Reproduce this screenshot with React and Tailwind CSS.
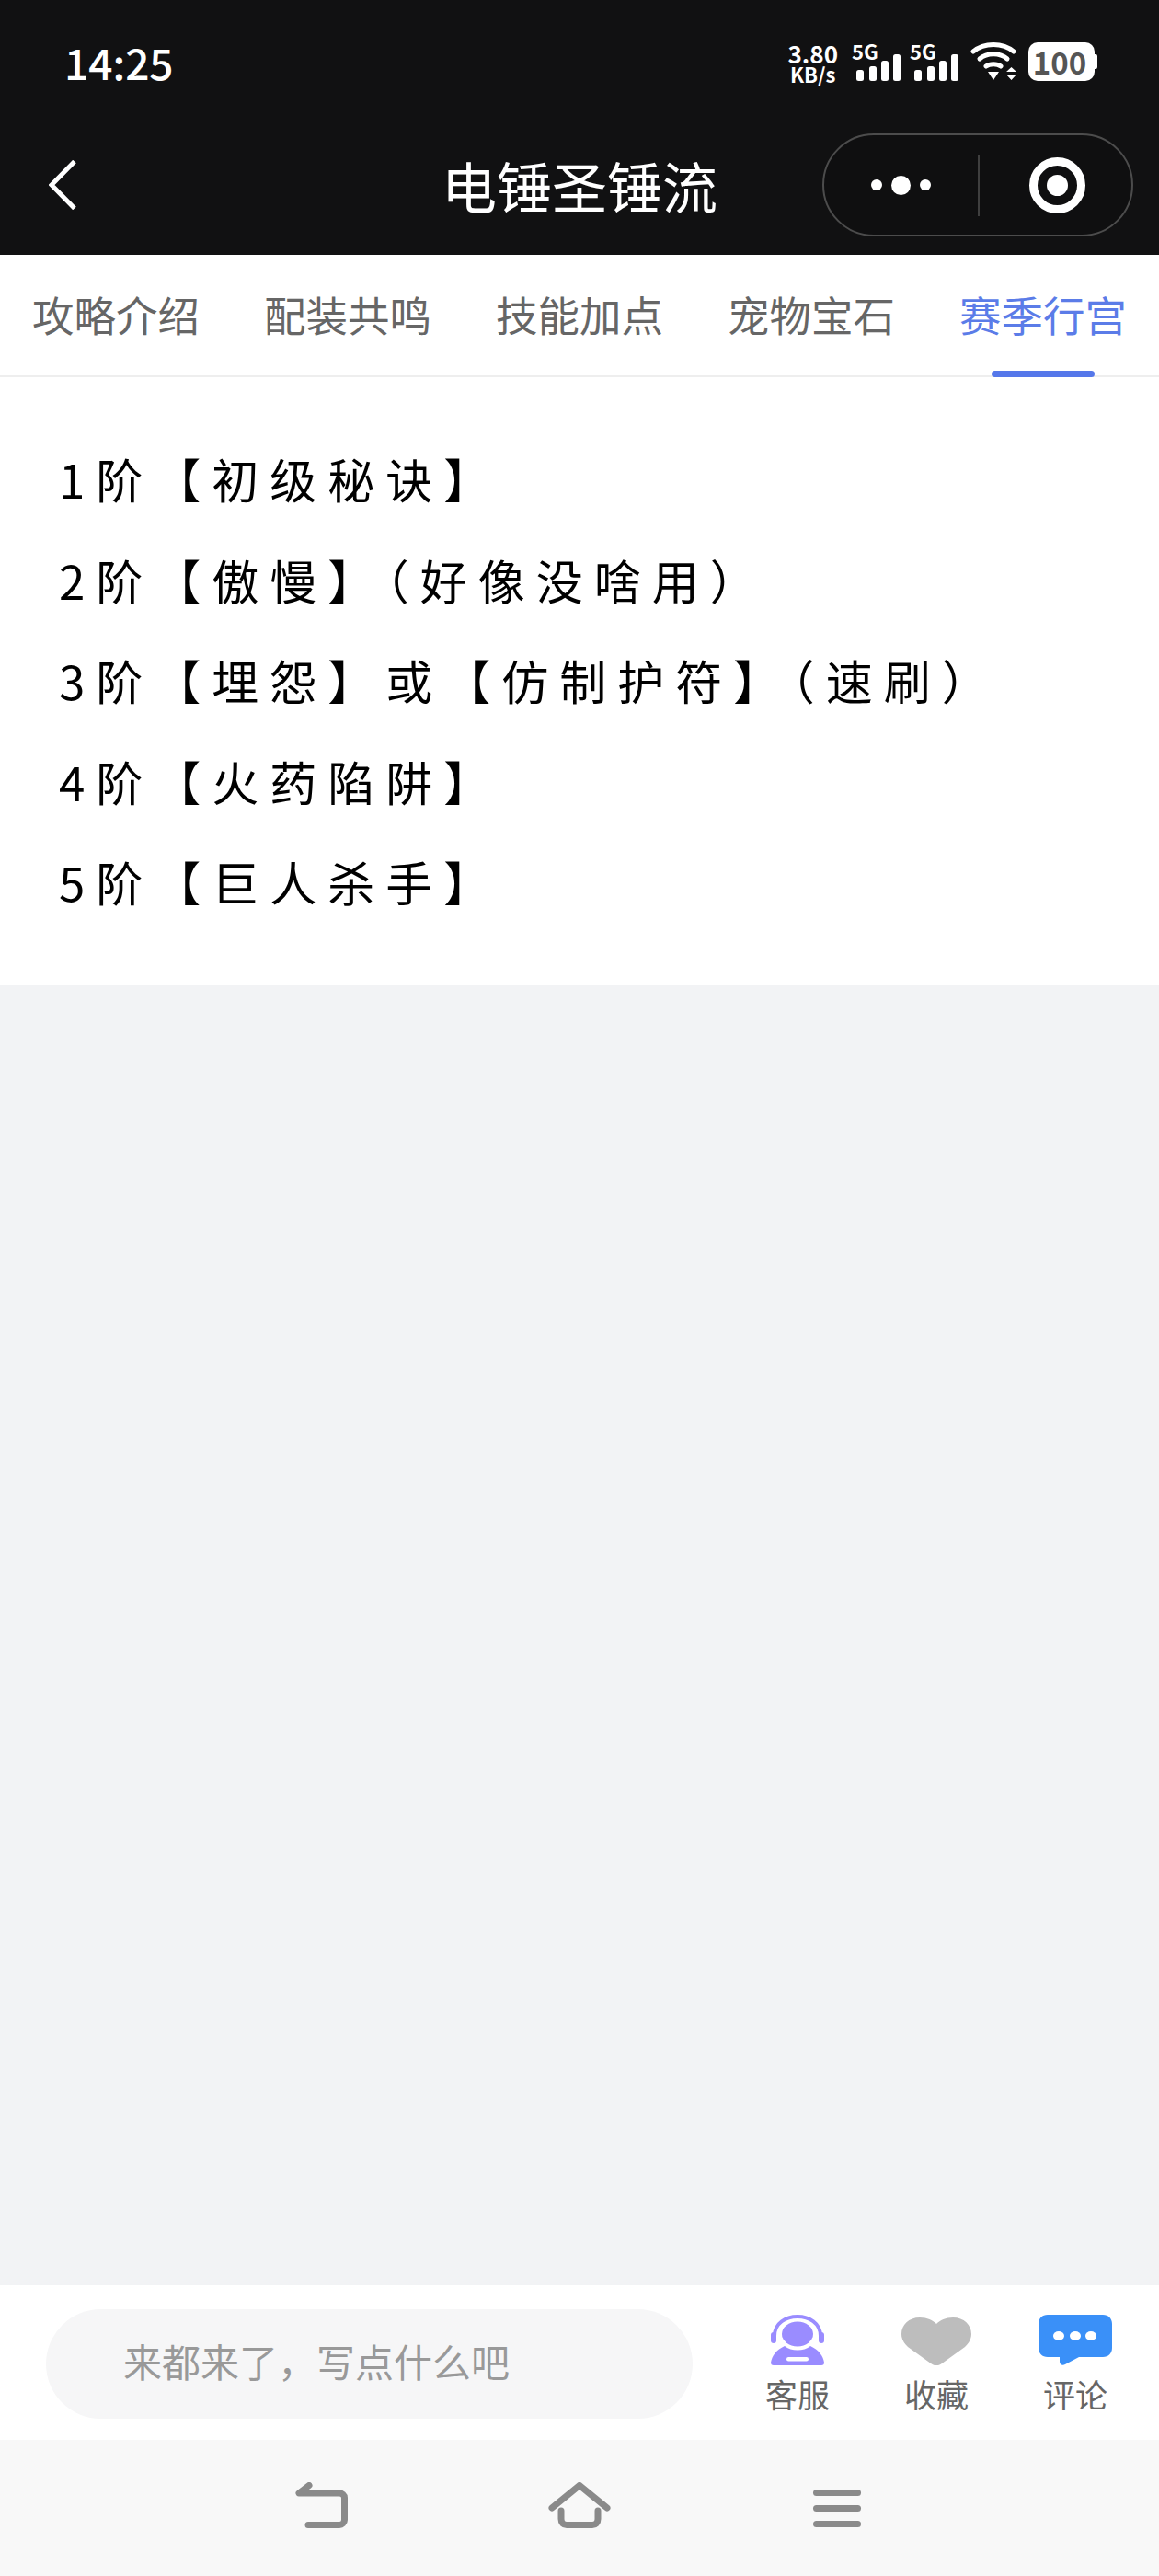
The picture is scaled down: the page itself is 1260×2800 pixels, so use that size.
import React from "react";

const FONT = "font-['Noto_Sans_CJK_SC','Noto_Sans',sans-serif]";

const tabs = ["攻略介绍", "配装共鸣", "技能加点", "宠物宝石", "赛季行宫"];

const lines = [
  "1阶【初级秘诀】",
  "2阶【傲慢】（好像没啥用）",
  "3阶【埋怨】或【仿制护符】（速刷）",
  "4阶【火药陷阱】",
  "5阶【巨人杀手】",
];

function Signal() {
  return (
    <div className="relative w-[50px] h-[42px]">
      <span className="absolute -left-[3px] -top-[3px] text-[22px] leading-[24px] font-bold whitespace-nowrap">5G</span>
      <svg width="50" height="42" viewBox="0 0 50 42" fill="#fff">
        <rect x="2" y="30" width="8" height="12" rx="2.5" />
        <rect x="16" y="26" width="8" height="16" rx="2.5" />
        <rect x="29" y="20" width="8" height="22" rx="2.5" />
        <rect x="42" y="13" width="8" height="29" rx="2.5" />
      </svg>
    </div>
  );
}

function Wifi() {
  return (
    <svg width="50" height="42" viewBox="0 0 50 42" fill="none" stroke="#fff" strokeWidth="5" strokeLinecap="round">
      <path d="M3 10 C15 0 35 0 47 10" />
      <path d="M10 18 C18 11 32 11 40 18" />
      <path d="M17 26 C21 23 29 23 33 26" />
      <path d="M19 32 H31 L25 41 Z" fill="#fff" stroke="none" />
      <path d="M39 32 L44.500 27 L50 32 Z M39 35 H50 L44.500 41 Z" fill="#fff" stroke="none" />
    </svg>
  );
}

function Headset() {
  return (
    <svg width="58" height="55" viewBox="0 0 58 55" fill="#9a8cff">
      <path d="M4 23 C4 -5 54 -5 54 23" fill="none" stroke="#9a8cff" strokeWidth="4" />
      <rect x="0" y="19" width="6" height="12" rx="3" />
      <rect x="52" y="19" width="6" height="12" rx="3" />
      <ellipse cx="29" cy="21" rx="17" ry="13.500" />
      <path d="M15 34 C22 40 36 40 43 34 C52 38 57 45 58 52 C58 54 57 55 55 55 H3 C1 55 0 54 0 52 C1 45 6 38 15 34 Z" />
      <rect x="17" y="46" width="24" height="4.500" rx="2.200" fill="#fff" />
    </svg>
  );
}

function Heart() {
  return (
    <svg width="76" height="52" viewBox="0 0 76 52" fill="#bdbdbd">
      <path d="M20 0 C28 0 34 3 38 7 C42 3 48 0 56 0 C68 0 76 8 76 18 C76 24 73 28 69 32 L44 50 C40 53 36 53 32 50 L7 32 C3 28 0 24 0 18 C0 8 8 0 20 0 Z" />
    </svg>
  );
}

function Chat() {
  return (
    <svg width="80" height="55" viewBox="0 0 80 55" fill="#3a90f8">
      <path d="M10 0 H70 C76 0 80 4 80 10 V36 C80 42 76 46 70 46 H44 L29 54 C26 56 23 54 23 51 V46 H10 C4 46 0 42 0 36 V10 C0 4 4 0 10 0 Z" />
      <ellipse cx="22" cy="23" rx="6" ry="5" fill="#fff" />
      <ellipse cx="40" cy="23" rx="6" ry="5" fill="#fff" />
      <ellipse cx="57" cy="23" rx="6" ry="5" fill="#fff" />
    </svg>
  );
}

function ActionItem({ icon, label, slot }) {
  return (
    <div className={`flex flex-col items-center ${slot}`}>
      <div className="h-[58px] flex items-end justify-center">{icon}</div>
      <span className="text-[35px] leading-[50px] text-[#666] mt-[6px]">{label}</span>
    </div>
  );
}

export default function App() {
  return (
    <div className={`w-[1260px] h-[2800px] flex flex-col bg-[#f2f3f5] ${FONT}`}>
      {/* Header */}
      <div className="h-[277px] bg-[#111112] text-white shrink-0">
        <div className="h-[134px] flex items-center justify-between pl-[70px] pr-[70px]">
          <span className="text-[46px] font-medium leading-none">14:25</span>
          <div className="flex items-center">
            <div className="flex flex-col items-center font-bold mr-[18px]">
              <span className="text-[26px] leading-[25px]">3.80</span>
              <span className="text-[22px] leading-[20px]">KB/s</span>
            </div>
            <Signal />
            <div className="w-[13px]" />
            <Signal />
            <div className="w-[13px]" />
            <Wifi />
            <div className="w-[13px]" />
            <div className="relative w-[72px] h-[42px] bg-white rounded-[10px] flex items-center justify-center pr-[4px] text-[#555] font-bold text-[33px] leading-none">
              100
              <div className="absolute -right-[3px] top-[13px] w-[4px] h-[16px] bg-white rounded-r-[2px]" />
            </div>
          </div>
        </div>
        <div className="h-[134px] grid grid-cols-[1fr_auto_1fr] items-center">
          <div className="pl-[53px]">
            <svg width="30" height="54" viewBox="0 0 30 54" fill="none" stroke="#fff" strokeWidth="5">
              <path d="M28 1.500 L3 27 L28 52.500" />
            </svg>
          </div>
          <h1 className="text-[60px] leading-none font-normal">电锤圣锤流</h1>
          <div className="justify-self-end mr-[28px] w-[338px] h-[112px] rounded-full border-2 border-[#4c4c4c] bg-[#0f0f10] flex items-center">
            <div className="w-[167px] flex items-center justify-center gap-[10px]">
              <span className="w-[12px] h-[12px] rounded-full bg-white" />
              <span className="w-[21px] h-[21px] rounded-full bg-white" />
              <span className="w-[12px] h-[12px] rounded-full bg-white" />
            </div>
            <div className="w-[2px] h-[67px] bg-[#3f3f3f]" />
            <div className="flex-1 flex items-center justify-center pl-[4px]">
              <div className="w-[61px] h-[61px] rounded-full border-[9px] border-white flex items-center justify-center">
                <span className="w-[23px] h-[23px] rounded-full bg-white" />
              </div>
            </div>
          </div>
        </div>
      </div>

      {/* Tabs */}
      <div className="h-[133px] shrink-0 bg-white border-b-2 border-[#eeeeee] flex gap-[70px] pl-[35px]">
        {tabs.map((tab, index) => (
          <div key={tab} className="relative flex items-center h-[133px] pb-[3px]">
            <span className={`text-[45.500px] leading-none ${index === 4 ? "text-[#5b7ce8]" : "text-[#666]"}`}>{tab}</span>
            {index === 4 && (
              <div className="absolute left-[35px] right-[35px] bottom-0 h-[7px] rounded-full bg-[#5577ea]" />
            )}
          </div>
        ))}
      </div>

      {/* Content */}
      <div className="bg-white shrink-0 pt-[56px] pb-[57px] pl-[64px]">
        {lines.map((line) => (
          <p key={line} className="text-[51px] leading-[109.500px] tracking-[12px] text-[#000] whitespace-nowrap">
            {line}
          </p>
        ))}
      </div>

      <div className="flex-1" />

      {/* Comment bar */}
      <div className="h-[168px] shrink-0 bg-white flex items-start pl-[50px] pt-[26px]">
        <div className="w-[703px] h-[119px] rounded-full bg-[#f6f6f7] flex items-center pl-[84px] pb-[9px] text-[42px] text-[#999]">
          来都来了，写点什么吧
        </div>
        <div className="flex pl-[74px] mt-[3px]">
          <ActionItem icon={<Headset />} label="客服" slot="w-[80px]" />
          <ActionItem icon={<Heart />} label="收藏" slot="w-[80px] ml-[71px]" />
          <ActionItem icon={<Chat />} label="评论" slot="w-[80px] ml-[71px]" />
        </div>
      </div>

      {/* Android nav */}
      <div className="h-[148px] shrink-0 bg-[#f8f8f8] flex items-start justify-center pt-[46px] pr-[4px]">
        <svg width="57" height="50" viewBox="0 0 57 50" fill="none" stroke="#8a8a8a" strokeWidth="7" strokeLinecap="round" strokeLinejoin="round">
          <path d="M15 3.500 L4 12 H48 C51 12 53.500 14 53.500 17 V41 C53.500 44 51 46.500 48 46.500 H14" />
        </svg>
        <svg className="ml-[218px]" width="68" height="50" viewBox="0 0 68 50" fill="none" stroke="#8a8a8a" strokeWidth="7" strokeLinecap="round" strokeLinejoin="round">
          <path d="M4 28 L34 3.500 L64 28" />
          <path d="M14 31 V40 C14 44 16.500 46.500 20 46.500 H48 C51.500 46.500 54 44 54 40 V31" />
        </svg>
        <div className="ml-[220px] w-[52px] flex flex-col gap-[10px] mt-[8px]">
          <div className="h-[7px] rounded-full bg-[#8a8a8a]" />
          <div className="h-[7px] rounded-full bg-[#8a8a8a]" />
          <div className="h-[7px] rounded-full bg-[#8a8a8a]" />
        </div>
      </div>
    </div>
  );
}
